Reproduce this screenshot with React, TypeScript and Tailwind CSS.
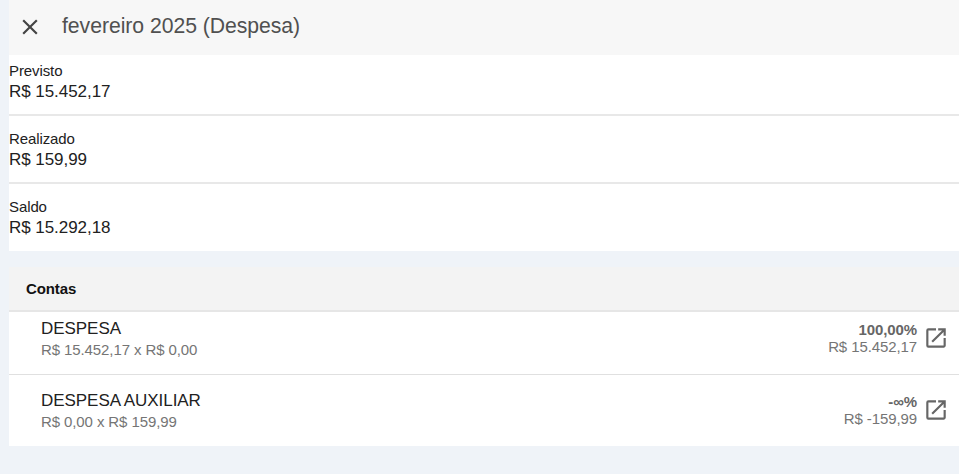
import { MdClose, MdOpenInNew } from 'react-icons/md';

interface Account {
  name: string;
  detail: string;
  percent: string;
  balance: string;
}

const totals = [
  { label: 'Previsto', value: 'R$ 15.452,17' },
  { label: 'Realizado', value: 'R$ 159,99' },
  { label: 'Saldo', value: 'R$ 15.292,18' },
];

const accounts: Account[] = [
  {
    name: 'DESPESA',
    detail: 'R$ 15.452,17 x R$ 0,00',
    percent: '100,00%',
    balance: 'R$ 15.452,17',
  },
  {
    name: 'DESPESA AUXILIAR',
    detail: 'R$ 0,00 x R$ 159,99',
    percent: '-∞%',
    balance: 'R$ -159,99',
  },
];

function AccountRow({ account }: { account: Account }) {
  return (
    <li className="flex h-[71px] items-start justify-between pl-8 pr-[10px] pt-[15px] first:h-[63px] first:pt-[6px]">
      <div>
        <p className="text-[17px] leading-[22px] tracking-[-0.05px] text-[#212121]">
          {account.name}
        </p>
        <p className="text-[15px] leading-[19px] tracking-[-0.1px] text-[#757575]">
          {account.detail}
        </p>
      </div>
      <div className="flex items-start gap-[6px] text-[#666]">
        <div className="pt-[3px] text-right text-[15px] leading-[17px] tracking-[-0.1px] text-[#757575]">
          <p className="font-bold text-[#666]">{account.percent}</p>
          <p>{account.balance}</p>
        </div>
        <button type="button" aria-label="Abrir" className="pt-[7px]">
          <MdOpenInNew size={26} />
        </button>
      </div>
    </li>
  );
}

export default function App() {
  return (
    <div className="bg-white pr-1">
      <div className="h-[474px] overflow-hidden bg-[#eff3f8] pl-[9px] font-['Liberation_Sans',Arial,sans-serif]">
        <header className="flex h-[55px] items-center bg-[#f7f7f7] pb-[2px] pl-2">
          <button type="button" aria-label="Fechar" className="text-[#444]">
            <MdClose size={26} />
          </button>
          <h1 className="pb-[2px] pl-[19px] text-[21.2px] leading-6 tracking-[-0.04px] text-[#505050]">
            fevereiro 2025 (Despesa)
          </h1>
        </header>

        <dl className="bg-white text-[#212121]">
          {totals.map((total) => (
            <div
              key={total.label}
              className="h-[68px] border-b-2 border-[#e8e8e8] pt-3 first:h-[61px] first:pt-[5px] last:h-[67px] last:border-b-0"
            >
              <dt className="text-[15px] leading-[21px] tracking-[-0.1px]">{total.label}</dt>
              <dd className="text-[17px] leading-[22px] tracking-[-0.05px]">{total.value}</dd>
            </div>
          ))}
        </dl>

        <section className="mt-4">
          <h2 className="h-[45px] border-b-2 border-[#e6e6e6] bg-[#f3f3f3] pl-[17px] pt-3 text-[15px] font-bold leading-5 tracking-[-0.1px] text-[#111]">
            Contas
          </h2>
          <ul className="divide-y divide-[#e0e0e0] bg-white">
            {accounts.map((account) => (
              <AccountRow key={account.name} account={account} />
            ))}
          </ul>
        </section>
      </div>
    </div>
  );
}
